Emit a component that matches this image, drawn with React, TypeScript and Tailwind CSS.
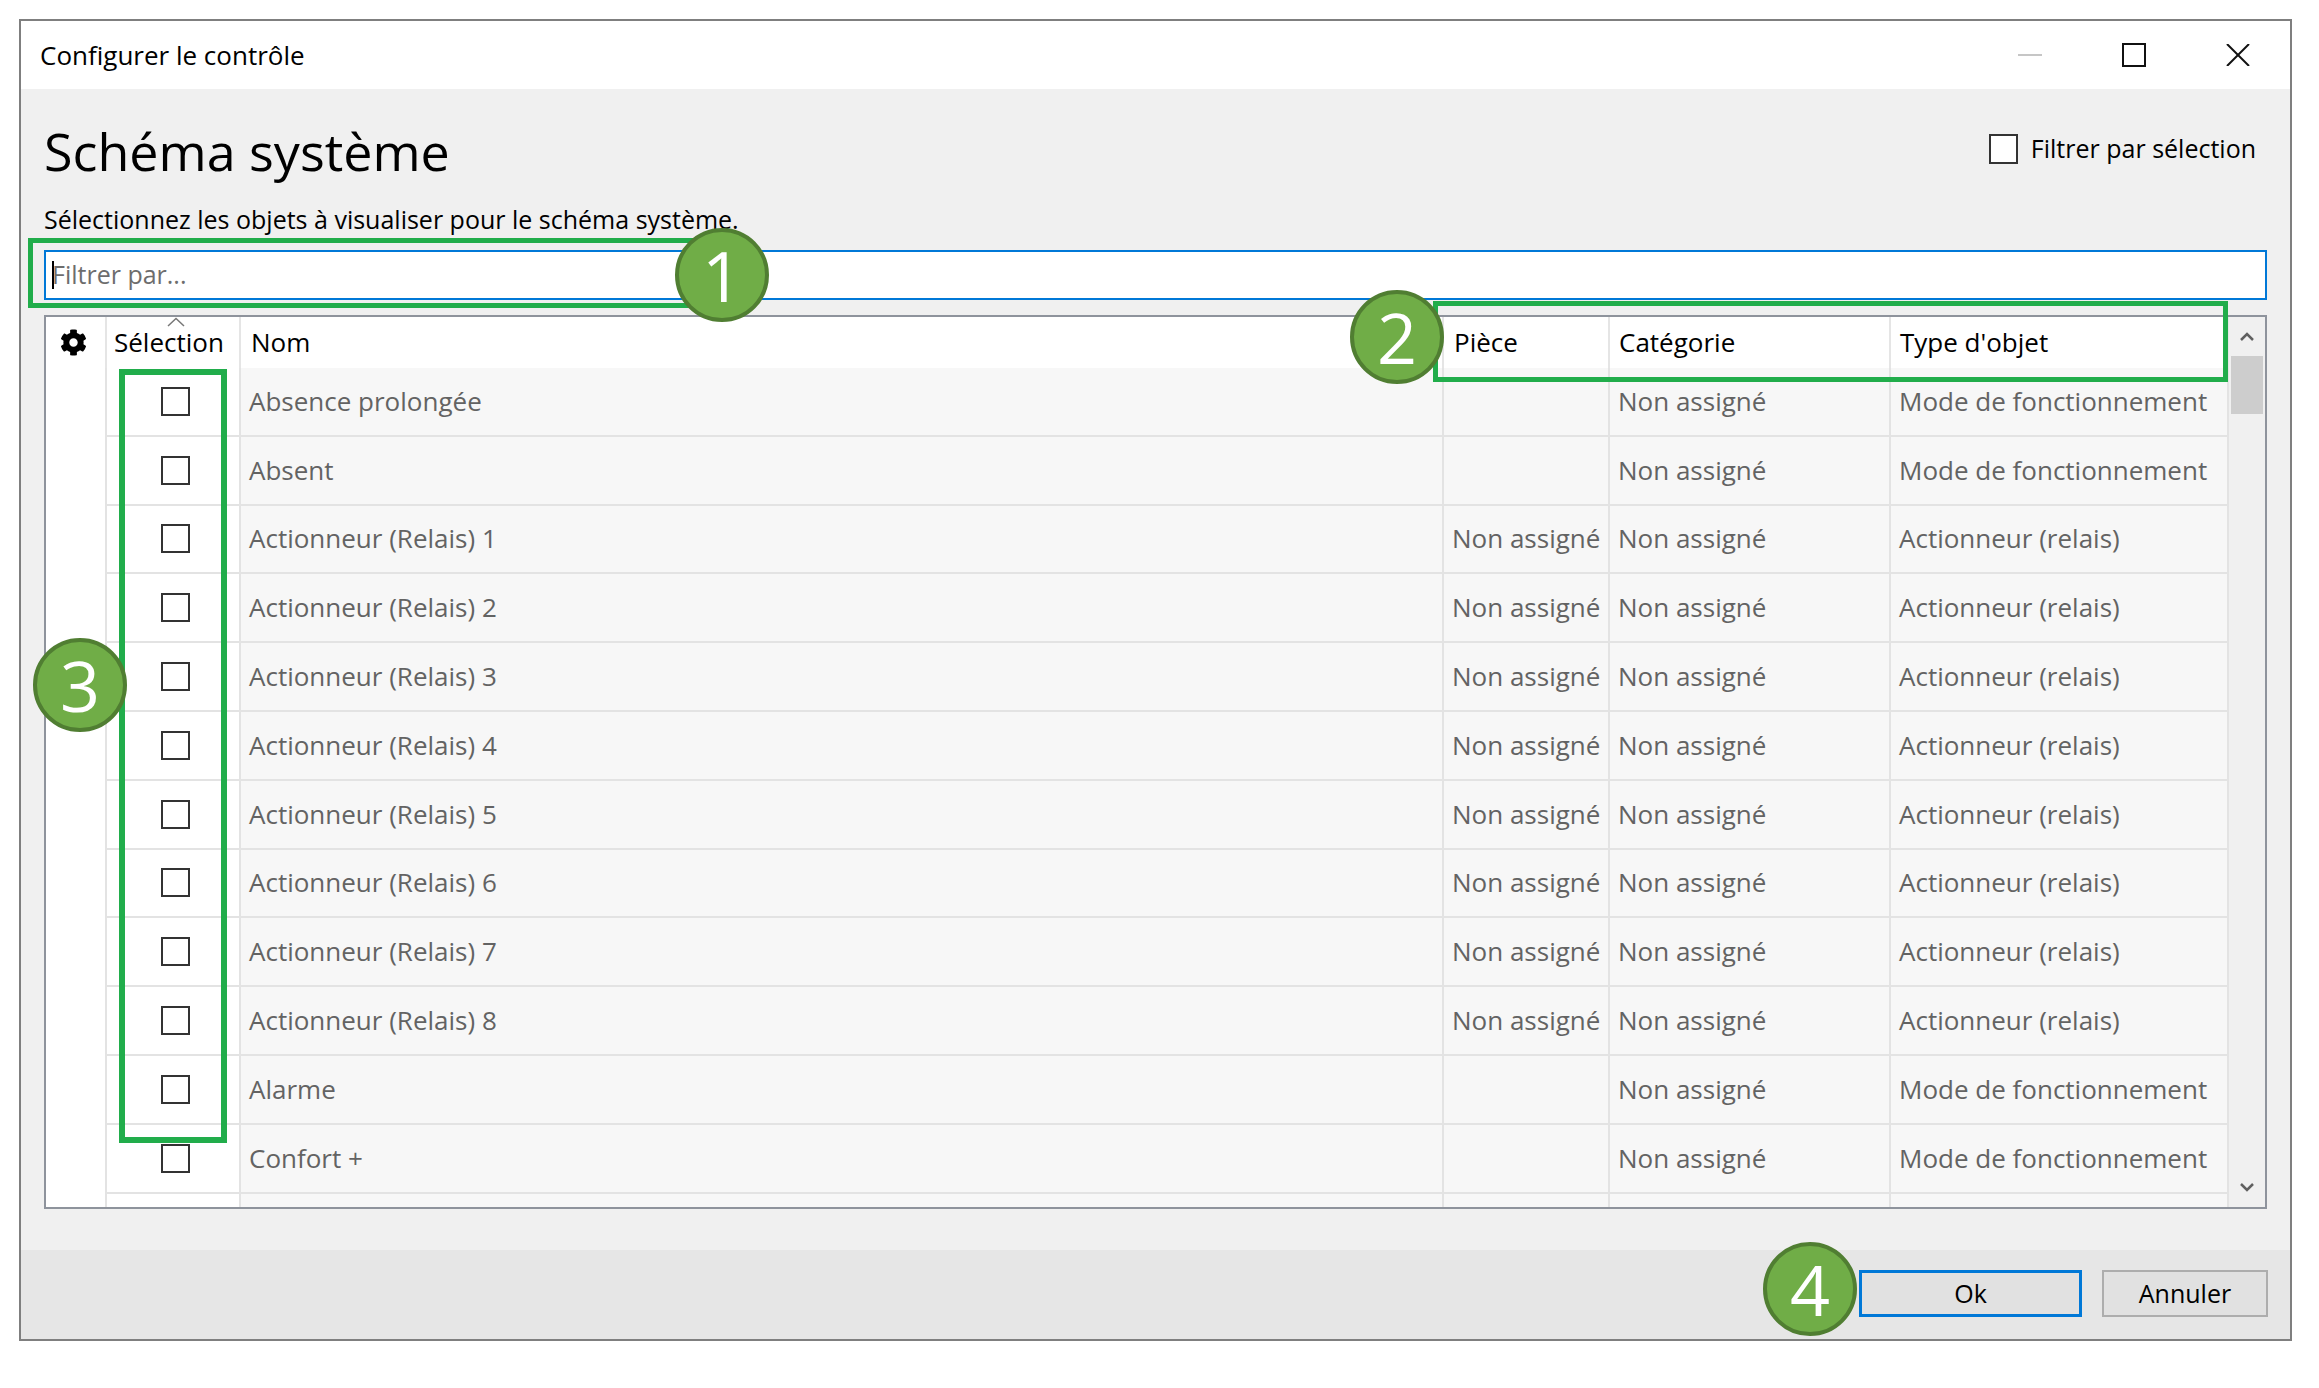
import { FaCog } from "react-icons/fa"

type Row = { nom: string; piece: string; cat: string; type: string }

const rows: Row[] = [
  { nom: "Absence prolongée", piece: "", cat: "Non assigné", type: "Mode de fonctionnement" },
  { nom: "Absent", piece: "", cat: "Non assigné", type: "Mode de fonctionnement" },
  ...[1, 2, 3, 4, 5, 6, 7, 8].map((n) => ({
    nom: `Actionneur (Relais) ${n}`,
    piece: "Non assigné",
    cat: "Non assigné",
    type: "Actionneur (relais)",
  })),
  { nom: "Alarme", piece: "", cat: "Non assigné", type: "Mode de fonctionnement" },
  { nom: "Confort +", piece: "", cat: "Non assigné", type: "Mode de fonctionnement" },
]

const cols = "grid grid-cols-[61px_134px_1203px_166px_281px_338px]"
const textCell =
  "bg-[#f7f7f7] border-r-2 border-b-2 border-[#e3e3e3] flex items-center pl-[8px] overflow-hidden whitespace-nowrap"

function Badge({ n, className }: { n: string; className: string }) {
  return (
    <div
      className={`absolute w-[94px] h-[94px] rounded-full bg-[#70ad47] border-[4px] border-[#507e32] flex items-center justify-center text-white text-[70px] leading-none ${className}`}
    >
      {n}
    </div>
  )
}

function TableRow({ row }: { row?: Row }) {
  return (
    <div className={`${cols} h-[68.8px] shrink-0`}>
      <div className="bg-white border-r-2 border-[#e3e3e3]" />
      <div className="bg-white border-r-2 border-b-2 border-[#e3e3e3] flex items-center justify-center pl-[4px]">
        {row && <div className="w-[29px] h-[29px] border-2 border-[#333333] bg-white" />}
      </div>
      <div className={textCell}>{row?.nom}</div>
      <div className={textCell}>{row?.piece}</div>
      <div className={textCell}>{row?.cat}</div>
      <div className={textCell}>{row?.type}</div>
    </div>
  )
}

export default function App() {
  return (
    <div className="relative w-[2319px] h-[1388px] bg-white pt-[19px] pl-[19px] font-['Open_Sans','Noto_Sans',sans-serif] text-black">
      <div className="w-[2273px] h-[1322px] border-2 border-[#7f7f7f] flex flex-col bg-[#f0f0f0]">
        {/* title bar */}
        <div className="h-[68px] shrink-0 bg-white flex items-center justify-between">
          <span className="pl-[19px] text-[26px]">Configurer le contrôle</span>
          <div className="flex h-full">
            <div className="w-[104px] h-full flex items-center justify-center">
              <svg width="24" height="4" viewBox="0 0 24 4">
                <line x1="0" y1="2" x2="24" y2="2" stroke="#c6c6c6" strokeWidth="2" />
              </svg>
            </div>
            <div className="w-[104px] h-full flex items-center justify-center">
              <svg width="24" height="24" viewBox="0 0 24 24">
                <rect x="1" y="1" width="22" height="22" fill="none" stroke="#111" strokeWidth="2" />
              </svg>
            </div>
            <div className="w-[104px] h-full flex items-center justify-center">
              <svg width="24" height="22" viewBox="0 0 24 22">
                <line x1="1" y1="0" x2="23" y2="22" stroke="#111" strokeWidth="2" />
                <line x1="23" y1="0" x2="1" y2="22" stroke="#111" strokeWidth="2" />
              </svg>
            </div>
          </div>
        </div>

        {/* body */}
        <div className="flex-1 px-[23px] pt-[39px] flex flex-col">
          <div className="flex justify-between items-start">
            <h1 className="text-[52px] leading-[45px]">Schéma système</h1>
            <label className="flex items-center gap-[13px] mt-[2px] mr-[11px]">
              <div className="w-[29px] h-[30px] border-2 border-[#333333] bg-white" />
              <span className="text-[25px]">Filtrer par sélection</span>
            </label>
          </div>
          <p className="mt-[34px] text-[25px] leading-[25px]">
            Sélectionnez les objets à visualiser pour le schéma système.
          </p>
          <div className="mt-[18px] h-[50px] shrink-0 border-2 border-[#0078d7] bg-white flex items-center pl-[6px]">
            <span className="w-[2px] h-[28px] bg-black" />
            <span className="-ml-[2px] text-[25px] text-[#6d6d6d]">Filtrer par...</span>
          </div>

          {/* table */}
          <div className="mt-[15px] h-[894px] shrink-0 border-2 border-[#8e939c] bg-white flex">
            <div className="w-[2183px] shrink-0 overflow-hidden flex flex-col">
              <div className={`${cols} h-[51px] shrink-0 bg-white text-[26px]`}>
                <div className="border-r-2 border-[#e5e5e5] flex items-center justify-center pr-[4px]">
                  <FaCog size={27} color="#000" />
                </div>
                <div className="relative border-r-2 border-[#e5e5e5] flex items-center pl-[7px]">
                  <svg className="absolute top-0 left-[60px]" width="18" height="10" viewBox="0 0 18 10">
                    <polyline points="1,9 9,1.5 17,9" fill="none" stroke="#777" strokeWidth="1.5" />
                  </svg>
                  Sélection
                </div>
                <div className="border-r-2 border-[#e5e5e5] flex items-center pl-[10px]">Nom</div>
                <div className="border-r-2 border-[#e5e5e5] flex items-center pl-[10px]">Pièce</div>
                <div className="border-r-2 border-[#e5e5e5] flex items-center pl-[9px]">Catégorie</div>
                <div className="border-r-2 border-[#e5e5e5] flex items-center pl-[9px]">Type d'objet</div>
              </div>
              <div className="text-[26px] text-[#636363] flex flex-col">
                {rows.map((r) => (
                  <TableRow key={r.nom} row={r} />
                ))}
                <TableRow />
              </div>
            </div>
            {/* scrollbar */}
            <div className="flex-1 bg-[#f0f0f0] flex flex-col items-center">
              <div className="h-[39px] shrink-0 flex items-center justify-center">
                <svg width="14" height="9" viewBox="0 0 14 9">
                  <polyline points="1,8 7,2 13,8" fill="none" stroke="#606060" strokeWidth="2.5" />
                </svg>
              </div>
              <div className="w-[32px] h-[58px] bg-[#cdcdcd]" />
              <div className="flex-1" />
              <div className="h-[39px] shrink-0 flex items-center justify-center">
                <svg width="14" height="9" viewBox="0 0 14 9">
                  <polyline points="1,1 7,7 13,1" fill="none" stroke="#606060" strokeWidth="2.5" />
                </svg>
              </div>
            </div>
          </div>
        </div>

        {/* footer */}
        <div className="h-[89px] shrink-0 bg-[#e6e6e6] flex justify-end items-start pt-[20px] pr-[22px] gap-[20px]">
          <button className="w-[223px] h-[47px] border-[3px] border-[#0078d7] bg-[#e1e1e1] text-[25px]">Ok</button>
          <button className="w-[166px] h-[47px] border-2 border-[#adadad] bg-[#e1e1e1] text-[25px]">Annuler</button>
        </div>
      </div>

      {/* annotations */}
      <div className="absolute left-[28px] top-[238px] w-[672px] h-[70px] border-[5px] border-[#21ad4b]" />
      <div className="absolute left-[1433px] top-[301px] w-[795px] h-[81px] border-[5px] border-[#21ad4b]" />
      <div className="absolute left-[119px] top-[369px] w-[108px] h-[774px] border-[6px] border-[#21ad4b]" />
      <Badge n="1" className="left-[675px] top-[228px]" />
      <Badge n="2" className="left-[1350px] top-[290px]" />
      <Badge n="3" className="left-[33px] top-[638px]" />
      <Badge n="4" className="left-[1763px] top-[1242px]" />
    </div>
  )
}
